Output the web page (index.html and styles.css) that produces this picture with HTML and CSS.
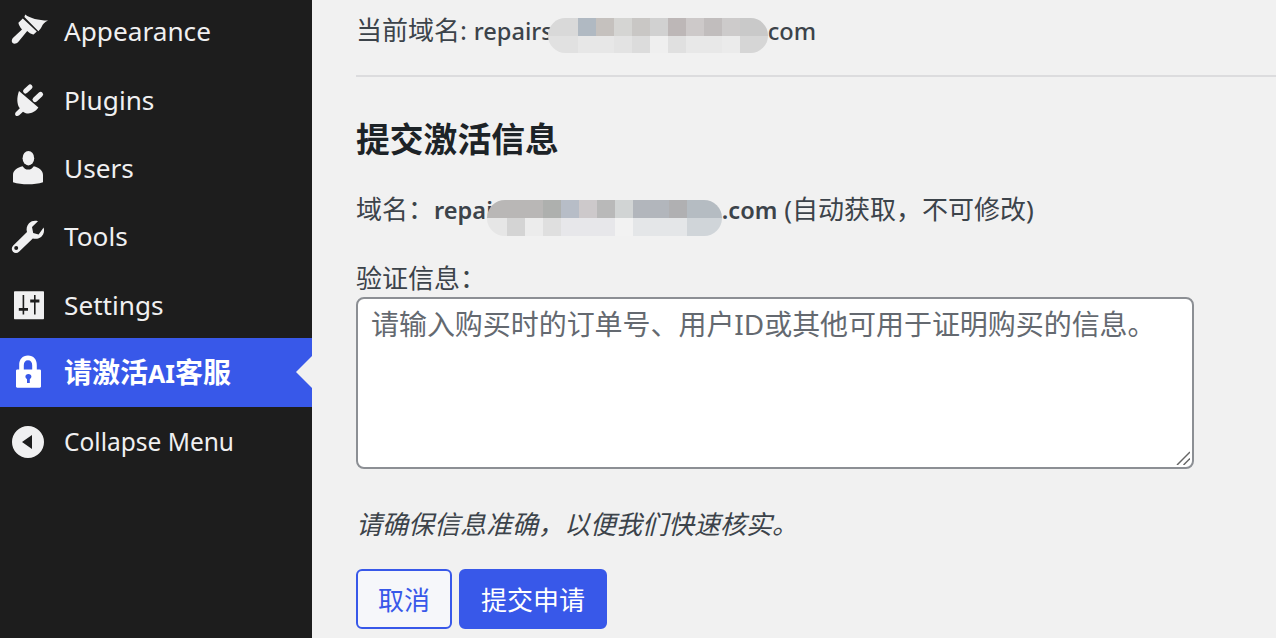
FILE: index.html
```html
<!DOCTYPE html>
<html lang="zh-CN">
<head>
<meta charset="utf-8">
<title>提交激活信息</title>
<link rel="stylesheet" href="styles.css">
</head>
<body>
<div class="app">
  <nav class="sidebar">
    <ul class="menu">
      <li class="item">
        <svg class="icon" viewBox="0 0 20 20"><path d="M8.600 1.200c2.600 2 6.600 3 11.600 3-1.800.8-2.800 1.800-3.300 3.100-.4 1-1 1.600-1.700 2.300L8.200 2.500z"/><path d="M7.400 3.200l7 6.600-1.600 1.500c-.8-.2-1.700-.7-2.300-1.100l-.9-.7L5.100 15c-.8.9-2.100 1.100-2.800.5-.7-.7-.5-2 .4-2.800L7 8.800l-.8-1.100c-.4-.6-.9-1.500-1-2.300z"/></svg>
        <span class="label-text">Appearance</span>
      </li>
      <li class="item">
        <svg class="icon" viewBox="0 0 20 20"><line class="icon-line" x1="8.800" y1="5" x2="11" y2="3"/><line class="icon-line" x1="13.500" y1="9.300" x2="16.300" y2="6.700"/><path d="M5.500 5l9.700 8.300c-1.400 2-3.700 3.200-5.700 2.900-.8-.1-1.500-.4-2-.8l-1.900 1.700c-.6.500-1.400.5-1.800.1s-.3-1.200.2-1.700l1.900-1.900C4.400 11.800 4.300 8.200 5.500 5z"/></svg>
        <span class="label-text">Plugins</span>
      </li>
      <li class="item">
        <svg class="icon" viewBox="0 0 20 20"><ellipse cx="10.200" cy="4.600" rx="2.900" ry="3.600"/><path d="M12.900 8.600c2.400.8 4.600 1.800 4.600 4.400v3.600c-2.200.7-4.800 1-7.500 1s-5.300-.3-7.500-1V13c0-2.600 2.300-3.600 4.800-4.400.6 1 1.600 1.700 2.800 1.700s2.200-.7 2.800-1.700z"/></svg>
        <span class="label-text">Users</span>
      </li>
      <li class="item">
        <svg class="icon" viewBox="0 0 20 20"><path fill-rule="evenodd" d="M17.800 5.200c.5 1.500.2 3.300-1 4.500-1.200 1.200-2.900 1.500-4.400 1l-6.900 6.700c-.8.800-2.200.8-3 0s-.8-2.200 0-3l7-6.900c-.5-1.500-.1-3.200 1-4.400 1.200-1.200 3-1.500 4.500-1l-3 2.900.6 3 2.700.7zM4.100 14.500a1 1 0 1 0 0 2 1 1 0 0 0 0-2z"/></svg>
        <span class="label-text">Tools</span>
      </li>
      <li class="item">
        <svg class="icon" viewBox="0 0 20 20"><path fill-rule="evenodd" d="M3.500 2.600h14c.3 0 .5.200.5.500v13c0 .3-.2.500-.5.500h-14c-.3 0-.5-.2-.5-.5v-13c0-.3.200-.5.500-.5zM7.300 4.500v6.500H5.400v1.400h1.900v1.900h.8v-1.900H10V11H8.100V4.500zm5.700 0v2.300h-1.900v1.400H13v6.100h.8V8.200h1.900V6.800h-1.900V4.500z"/></svg>
        <span class="label-text">Settings</span>
      </li>
      <li class="item item-active">
        <svg class="icon" viewBox="0 0 20 20"><path fill-rule="evenodd" d="M10 1.800c2.800 0 4.400 2 4.400 4.800V8.700h1.500c.3 0 .6.300.6.600v8c0 .3-.3.600-.6.600H4.600c-.3 0-.6-.3-.6-.6v-8c0-.3.300-.6.600-.6h1V6.600C5.600 3.800 7.200 1.800 10 1.800zm0 2.300c-1.400 0-2.100 1-2.100 2.500v2.100h4.200V6.600c0-1.500-.7-2.500-2.100-2.500zm.2 6.900c-.9 0-1.500.6-1.500 1.300 0 .6.300 1 .8 1.300v1.900h1.400v-1.900c.5-.3.800-.7.800-1.300 0-.7-.6-1.300-1.500-1.300z"/></svg>
        <span class="label-text">请激活<span class="latin-strong">AI</span>客服</span>
      </li>
      <li class="item item-collapse">
        <svg class="icon" viewBox="0 0 20 20"><path fill-rule="evenodd" d="M10 2a8 8 0 1 1 0 16 8 8 0 0 1 0-16zm2 4.500L7 10l5 3.500z"/></svg>
        <span class="collapse-text">Collapse Menu</span>
      </li>
    </ul>
  </nav>
  <main class="content">
    <p class="current">当前域名: <span class="latin">repairs</span><span class="blur blur-one"></span><span class="latin">com</span></p>
    <hr class="rule">
    <h3 class="title">提交激活信息</h3>
    <p class="domain">域名：<strong class="latin-bold">repai<span class="blur blur-two"></span>.com</strong> (自动获取，不可修改)</p>
    <label class="label" for="info">验证信息：</label>
    <div class="field-wrap">
      <textarea class="field" id="info" placeholder="请输入购买时的订单号、用户ID或其他可用于证明购买的信息。"></textarea>
      <svg class="grip" viewBox="0 0 14 14"><line x1="1" y1="14" x2="14" y2="1"/><line x1="7.500" y1="14" x2="14" y2="7.500"/></svg>
    </div>
    <p class="hint">请确保信息准确，以便我们快速核实。</p>
    <div class="actions">
      <button class="btn btn-outline" type="button">取消</button>
      <button class="btn btn-primary" type="button">提交申请</button>
    </div>
  </main>
</div>
</body>
</html>
```

FILE: styles.css
```css
* { box-sizing: border-box; }
html, body { margin: 0; height: 100%; overflow: hidden; }
body {
  background: #f1f1f1;
  color: #3c434a;
  font-family: "Noto Sans", "Noto Sans CJK SC", sans-serif;
  font-size: 26px;
}
.app { display: flex; height: 638px; }
.sidebar { width: 312px; flex: none; background: #1d1d1d; color: #f0f0f1; }
.menu { list-style: none; margin: -2px 0 0; padding: 0; }
.item {
  display: flex;
  align-items: center;
  height: 68.4px;
  padding-left: 8px;
  gap: 16px;
  font-size: 26.200px;
  position: relative;
}
.label-text { position: relative; top: -1px; }
.icon { width: 40px; height: 40px; flex: none; fill: #f0f0f1; }
.icon-line { stroke: #f0f0f1; stroke-width: 2.500; stroke-linecap: round; }
.item-active {
  height: 69px;
  margin-top: -2px;
  background: #3858e9;
  color: #fff;
  font-size: 28px;
  font-weight: 700;
}
.latin-strong { font-size: 25px; }
.item-active .icon { fill: #fff; }
.item-active::after {
  content: "";
  position: absolute;
  right: 0;
  top: 50%;
  margin-top: -16px;
  border: 16px solid transparent;
  border-right-color: #f1f1f1;
  border-left-width: 0;
}
.item-collapse { height: 70px; font-size: 24.500px; }

.content { flex: 1; padding: 0 0 0 44px; min-width: 0; }
.current { margin: 12px 0 0; height: 36px; line-height: 36px; white-space: nowrap; }
.latin { font-size: 23.600px; font-weight: 500; }
.latin-bold { font-size: 23.600px; font-weight: 600; }
.rule { margin: 27px 0 0; border: 0; border-top: 2px solid #dcdcde; }
.title { margin: 38px 0 0; font-size: 33.800px; line-height: 48px; font-weight: 700; color: #1d2327; }
.domain { margin: 28px 0 0; height: 36px; line-height: 36px; white-space: nowrap; }
.label { display: block; margin: 33px 0 0; line-height: 36px; height: 36px; }
.field-wrap { position: relative; width: 838px; margin-top: 1px; }
.field {
  display: block;
  width: 838px;
  height: 172px;
  padding: 7px 13px;
  border: 2px solid #8c8f94;
  border-radius: 8px;
  background: #fff;
  font: inherit;
  font-size: 28px;
  line-height: 36px;
  letter-spacing: -0.050px;
  resize: none;
}
.field::placeholder { color: #646970; opacity: 1; }
.grip { position: absolute; right: 4px; bottom: 4px; width: 14px; height: 14px; stroke: #666; stroke-width: 1.500; }
.hint { margin: 37px 0 0; line-height: 36px; font-style: italic; }
.actions { display: flex; gap: 7px; margin-top: 27px; }
.btn {
  height: 60px;
  border-radius: 6px;
  font: inherit;
  padding: 0;
  border: 2px solid #3858e9;
  white-space: nowrap;
}
.btn-outline { width: 96px; background: #f6f7fa; color: #3858e9; }
.btn-primary { width: 148px; background: #3858e9; color: #fff; }

.blur { display: inline-block; vertical-align: top; border-radius: 18px; }
.blur-one {
  margin: 6px 0 0 -5px; width: 220px; height: 35px;
  background:
    linear-gradient(90deg, #d9d9d9 0 30px, #b0b9c2 30px 48px, #c5c1be 48px 66px, #d5d5d3 66px 84px, #c9c7c5 84px 102px, #d1d1d1 102px 120px, #bdb7b7 120px 138px, #cdc9c9 138px 156px, #c1bdbd 156px 174px, #cdcbcb 174px 192px, #c9c9c9 192px 220px) top / 100% 18px no-repeat,
    linear-gradient(90deg, #e1e1e1 0 30px, #e7e7e7 30px 66px, #e3e3e3 66px 84px, #dcdcdc 84px 102px, #efefef 102px 120px, #e0e0e0 120px 138px, #e8e8e8 138px 174px, #ebebeb 174px 192px, #d6d6d6 192px 220px) bottom / 100% 17px no-repeat;
}
.blur-two {
  margin: 9px 0 0 -6px; width: 235px; height: 36px;
  background:
    linear-gradient(90deg, #b9b7b6 0 56px, #aeb0ae 56px 74px, #b7bdc7 74px 92px, #cdc9cb 92px 110px, #b9b9b9 110px 128px, #d1d4d4 128px 146px, #b2b6bc 146px 182px, #b0b0b2 182px 200px, #b5bcc2 200px 235px) top / 100% 18px no-repeat,
    linear-gradient(90deg, #e6e6e6 0 20px, #d4d4d4 20px 38px, #ececec 38px 56px, #dfdfdf 56px 74px, #e7e7ea 74px 128px, #f2f2f2 128px 146px, #e4e6e8 146px 200px, #d0d5d9 200px 235px) bottom / 100% 18px no-repeat;
}
```
